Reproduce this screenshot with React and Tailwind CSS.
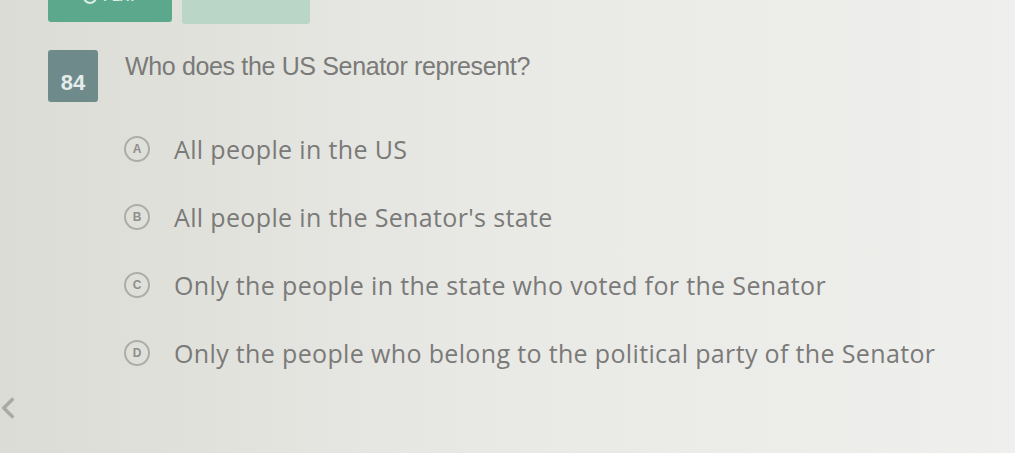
import React from 'react';
import { ChevronLeft } from 'lucide-react';

const options = [
  { key: 'A', text: 'All people in the US' },
  { key: 'B', text: "All people in the Senator's state" },
  { key: 'C', text: 'Only the people in the state who voted for the Senator' },
  { key: 'D', text: 'Only the people who belong to the political party of the Senator' },
];

const Option = ({ letter, text }) => (
  <div className="flex items-center gap-[24px]">
    <span className="w-[26px] h-[26px] rounded-full border-2 border-[#acacaa] flex items-center justify-center text-[12px] font-bold text-[#8e8e8c] font-['Liberation_Sans',sans-serif] shrink-0">
      {letter}
    </span>
    <span className="text-[25px] leading-none font-medium text-[#7a7a78] font-['Open_Sans',sans-serif] tracking-[0.35px]">
      {text}
    </span>
  </div>
);

export default function App() {
  return (
    <div className="relative w-[1015px] h-[453px] overflow-hidden bg-gradient-to-r from-[#dcdcd6] via-[#e9e9e6] to-[#efefed]">
      <div className="flex gap-[10px] pl-[48px]">
        <div className="w-[124px] h-[32px] rounded-b-[3px] bg-[#5ca88c] flex justify-center items-start gap-[6px] -mt-[10px]">
          <span className="w-[14px] h-[14px] rounded-full border-2 border-[#d9efe6]" />
          <span className="text-[13px] font-bold text-[#d9efe6] font-['Liberation_Sans',sans-serif] leading-none">PLAY</span>
        </div>
        <div className="w-[128px] h-[24px] rounded-b-[3px] bg-[#b9d6c6]" />
      </div>

      <div className="flex items-start gap-[27px] pl-[48px] pt-[26px]">
        <div className="w-[50px] h-[52px] rounded-[3px] bg-[#6f8a8b] flex items-end justify-center pb-[8px]">
          <span className="text-[22px] font-bold text-[#e4ecec] font-['Liberation_Sans',sans-serif] leading-none">84</span>
        </div>
        <p className="pt-[4px] text-[25px] leading-none text-[#7a7a78] font-['Liberation_Sans',sans-serif] tracking-[-0.35px]">
          Who does the US Senator represent?
        </p>
      </div>

      <div className="flex flex-col gap-[42px] pl-[124px] pt-[34px]">
        {options.map((o) => (
          <Option key={o.key} letter={o.key} text={o.text} />
        ))}
      </div>

      <ChevronLeft className="absolute left-[-9px] top-[388px] w-[34px] h-[40px] text-[#a9a9a6]" strokeWidth={2.5} />
    </div>
  );
}
